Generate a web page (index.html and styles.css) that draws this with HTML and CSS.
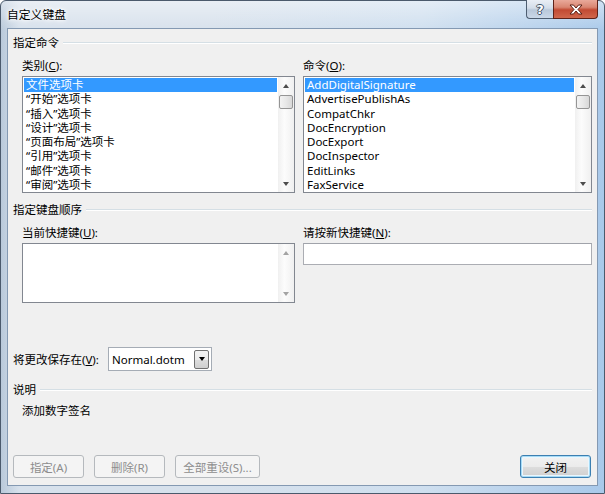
FILE: index.html
```html
<!DOCTYPE html>
<html lang="zh-CN">
<head>
<meta charset="utf-8">
<title>自定义键盘</title>
<link rel="stylesheet" href="styles.css">
</head>
<body>
<div class="window">
  <div class="titlebar">
    <span class="title">自定义键盘</span>
    <div class="caption">
      <div class="cap help"><span>?</span></div>
      <div class="cap close">
        <svg width="14" height="11" viewBox="0 0 14 11"><path d="M1 1h3.5L7 4l2.5-3H13L9 5.5 13 10H9.5L7 7l-2.5 3H1l4-4.5z" fill="#fff" stroke="#5a1e14" stroke-width="1" stroke-linejoin="round"/></svg>
      </div>
    </div>
  </div>
  <div class="client">
    <div class="group-head"><span>指定命令</span><i class="rule"></i></div>
    <div class="cols">
      <div class="col">
        <div class="label">类别(<u>C</u>):</div>
        <div class="listbox tall">
          <ul class="items">
            <li class="sel">文件选项卡</li>
            <li>“开始”选项卡</li>
            <li>“插入”选项卡</li>
            <li>“设计”选项卡</li>
            <li>“页面布局”选项卡</li>
            <li>“引用”选项卡</li>
            <li>“邮件”选项卡</li>
            <li>“审阅”选项卡</li>
          </ul>
          <div class="vscroll">
            <div class="arrow up"></div>
            <div class="track"><div class="thumb"></div></div>
            <div class="arrow down"></div>
          </div>
        </div>
      </div>
      <div class="col">
        <div class="label">命令(<u>O</u>):</div>
        <div class="listbox tall">
          <ul class="items latin">
            <li class="sel">AddDigitalSignature</li>
            <li>AdvertisePublishAs</li>
            <li>CompatChkr</li>
            <li>DocEncryption</li>
            <li>DocExport</li>
            <li>DocInspector</li>
            <li>EditLinks</li>
            <li>FaxService</li>
          </ul>
          <div class="vscroll">
            <div class="arrow up"></div>
            <div class="track"><div class="thumb"></div></div>
            <div class="arrow down"></div>
          </div>
        </div>
      </div>
    </div>

    <div class="group-head second"><span>指定键盘顺序</span><i class="rule"></i></div>
    <div class="cols">
      <div class="col">
        <div class="label">当前快捷键(<u>U</u>):</div>
        <div class="listbox short">
          <ul class="items"></ul>
          <div class="vscroll disabled">
            <div class="arrow up"></div>
            <div class="track"></div>
            <div class="arrow down"></div>
          </div>
        </div>
      </div>
      <div class="col">
        <div class="label">请按新快捷键(<u>N</u>):</div>
        <div class="textbox"></div>
      </div>
    </div>

    <div class="save-row">
      <span class="save-label">将更改保存在(<u>V</u>):</span>
      <div class="combo">
        <span class="combo-text">Normal.dotm</span>
        <div class="combo-btn"><i class="tri"></i></div>
      </div>
    </div>

    <div class="group-head third"><span>说明</span><i class="rule"></i></div>
    <div class="desc">添加数字签名</div>

    <div class="buttons">
      <div class="btn disabled w71">指定(A)</div>
      <div class="btn disabled w71">删除(R)</div>
      <div class="btn disabled w85">全部重设(S)...</div>
      <div class="btn default w71">关闭</div>
    </div>
  </div>
</div>
</body>
</html>
```

FILE: styles.css
```css
* { box-sizing: border-box; }
html, body { margin: 0; padding: 0; }
body {
  width: 605px;
  height: 494px;
  overflow: hidden;
  font-family: "Noto Sans", "Noto Sans CJK SC", sans-serif;
  font-size: 11.5px;
  color: #000;
  background: #fff;
}
.window {
  width: 605px;
  height: 494px;
  display: flex;
  flex-direction: column;
  border: 1px solid #4b5a6c;
  border-radius: 6px 6px 0 0;
  background:
    linear-gradient(to bottom, rgba(255,255,255,0.45), rgba(255,255,255,0) 30px),
    linear-gradient(to right, #b9c9da 0%, #d7e1ec 3%, #d7e1ec 35%, #cfdfef 70%, #a9c9ea 100%);
}
.titlebar {
  height: 27px;
  display: flex;
  justify-content: space-between;
  align-items: flex-start;
  padding-left: 6px;
  padding-right: 6px;
  flex: none;
}
.title {
  line-height: 27px;
  font-size: 11.8px;
  text-shadow: 0 0 6px #fff, 0 0 4px #fff, 0 0 2px #fff;
}
.caption {
  display: flex;
  margin-top: -1px;
}
.cap {
  height: 19px;
  display: flex;
  align-items: center;
  justify-content: center;
  border: 1px solid #4d5d70;
  border-top: none;
}
.help {
  width: 27px;
  border-radius: 0 0 0 4px;
  border-right: none;
  background: linear-gradient(to bottom, #e9eef5 0%, #d3dde9 45%, #b9c8da 55%, #cad8e8 100%);
}
.help span {
  font-family: "DejaVu Sans", sans-serif;
  font-weight: bold;
  font-size: 13px;
  color: #fff;
  text-shadow: 1px 0 0 #3f5266, -1px 0 0 #3f5266, 0 1px 0 #3f5266, 0 -1px 0 #3f5266;
  line-height: 1;
}
.close {
  width: 45px;
  border-radius: 0 0 4px 0;
  border-color: #5e2219;
  background: linear-gradient(to bottom, #e9a99a 0%, #d98672 40%, #c24a33 55%, #d0674c 100%);
}
.client {
  flex: 1;
  margin: 0 6px 7px 6px;
  border: 1px solid #8499b2;
  background: #f0f0f0;
  padding: 6px 5px 0 5px;
  display: flex;
  flex-direction: column;
}
.group-head {
  display: flex;
  align-items: center;
  height: 16px;
  line-height: 16px;
}
.group-head .rule {
  flex: 1;
  margin-left: 4px;
  height: 2px;
  border-top: 1px solid #d5dfe5;
  border-bottom: 1px solid #fff;
}
.group-head.second { margin-top: 9px; }
.group-head.third { margin-top: 11px; }
.cols {
  display: grid;
  grid-template-columns: 273px 289px;
  column-gap: 8px;
  margin-left: 9px;
}
.label {
  margin-top: 7px;
  height: 16px;
  line-height: 16px;
}
u { text-decoration: underline; text-underline-offset: 1px; }
.listbox {
  margin-top: 2px;
  border: 1px solid #828790;
  background: #fff;
  display: flex;
  padding: 1px 0 1px 1px;
}
.listbox.tall { height: 117px; }
.listbox.short { height: 60px; }
.items {
  list-style: none;
  margin: 0;
  padding: 0;
  flex: 1;
}
.items li {
  height: 14.3px;
  line-height: 14px;
  padding-left: 2px;
  white-space: nowrap;
}
.items li.sel {
  background: #3399ff;
  color: #fff;
  margin-right: 1px;
}
.vscroll {
  width: 16px;
  display: flex;
  flex-direction: column;
  margin: -1px 0 -1px 0;
  background: linear-gradient(to right, #f0f0f0, #fcfcfc 40%, #f0f0f0);
}
.vscroll .arrow {
  height: 17px;
  display: flex;
  align-items: center;
  justify-content: center;
}
.vscroll .arrow::after {
  content: "";
  width: 0;
  height: 0;
  border-left: 3.5px solid transparent;
  border-right: 3.5px solid transparent;
}
.vscroll .up::after { border-bottom: 4px solid #4d4d4d; }
.vscroll .down::after { border-top: 4px solid #4d4d4d; }
.vscroll.disabled .up::after { border-bottom-color: #a3a3a3; }
.vscroll.disabled .down::after { border-top-color: #a3a3a3; }
.vscroll .track { flex: 1; }
.thumb {
  margin: 1px 1px 0 1px;
  height: 14px;
  border: 1px solid #959595;
  border-radius: 2px;
  background: linear-gradient(to right, #f3f3f3, #e8e8e8 50%, #d8d8d8);
}
.textbox {
  margin-top: 2px;
  height: 22px;
  border: 1px solid #abadb3;
  border-top-color: #a0a3aa;
  background: #fff;
}
.save-row {
  margin-top: 44px;
  display: flex;
  align-items: center;
  height: 24px;
}
.save-label { width: 95px; }
.combo {
  width: 104px;
  height: 24px;
  border: 1px solid #a5acb5;
  background: #fff;
  display: flex;
  align-items: center;
  padding: 0 2px 0 3px;
}
.combo-text {
  flex: 1;
  font-size: 11.5px;
}
.combo-btn {
  width: 15px;
  height: 19px;
  border: 1px solid #707070;
  border-radius: 2px;
  background: linear-gradient(to bottom, #f2f2f2, #ebebeb 50%, #dddddd 51%, #cfcfcf);
  display: flex;
  align-items: center;
  justify-content: center;
}
.tri {
  width: 0;
  height: 0;
  border-left: 3.5px solid transparent;
  border-right: 3.5px solid transparent;
  border-top: 4px solid #000;
}
.desc {
  margin-top: 5px;
  margin-left: 9px;
  height: 16px;
  line-height: 16px;
}
.buttons {
  margin-top: 36px;
  display: flex;
  column-gap: 10px;
  height: 23px;
}
.btn {
  height: 23px;
  display: flex;
  align-items: center;
  justify-content: center;
  border-radius: 3px;
}
.w71 { width: 71px; }
.w85 { width: 85px; }
.btn.disabled {
  border: 1px solid #b5b9bd;
  background: #f4f4f4;
  color: #8d8d8d;
}
.btn.default {
  margin-left: auto;
  margin-right: 1px;
  border: 1px solid #3c7fb1;
  box-shadow: inset 0 0 0 1px #a6dbf6, inset 0 0 0 2px #eaf6fd;
  background: linear-gradient(to bottom, #f2f2f2 0%, #ebebeb 50%, #dddddd 51%, #cfcfcf 100%);
}
```
